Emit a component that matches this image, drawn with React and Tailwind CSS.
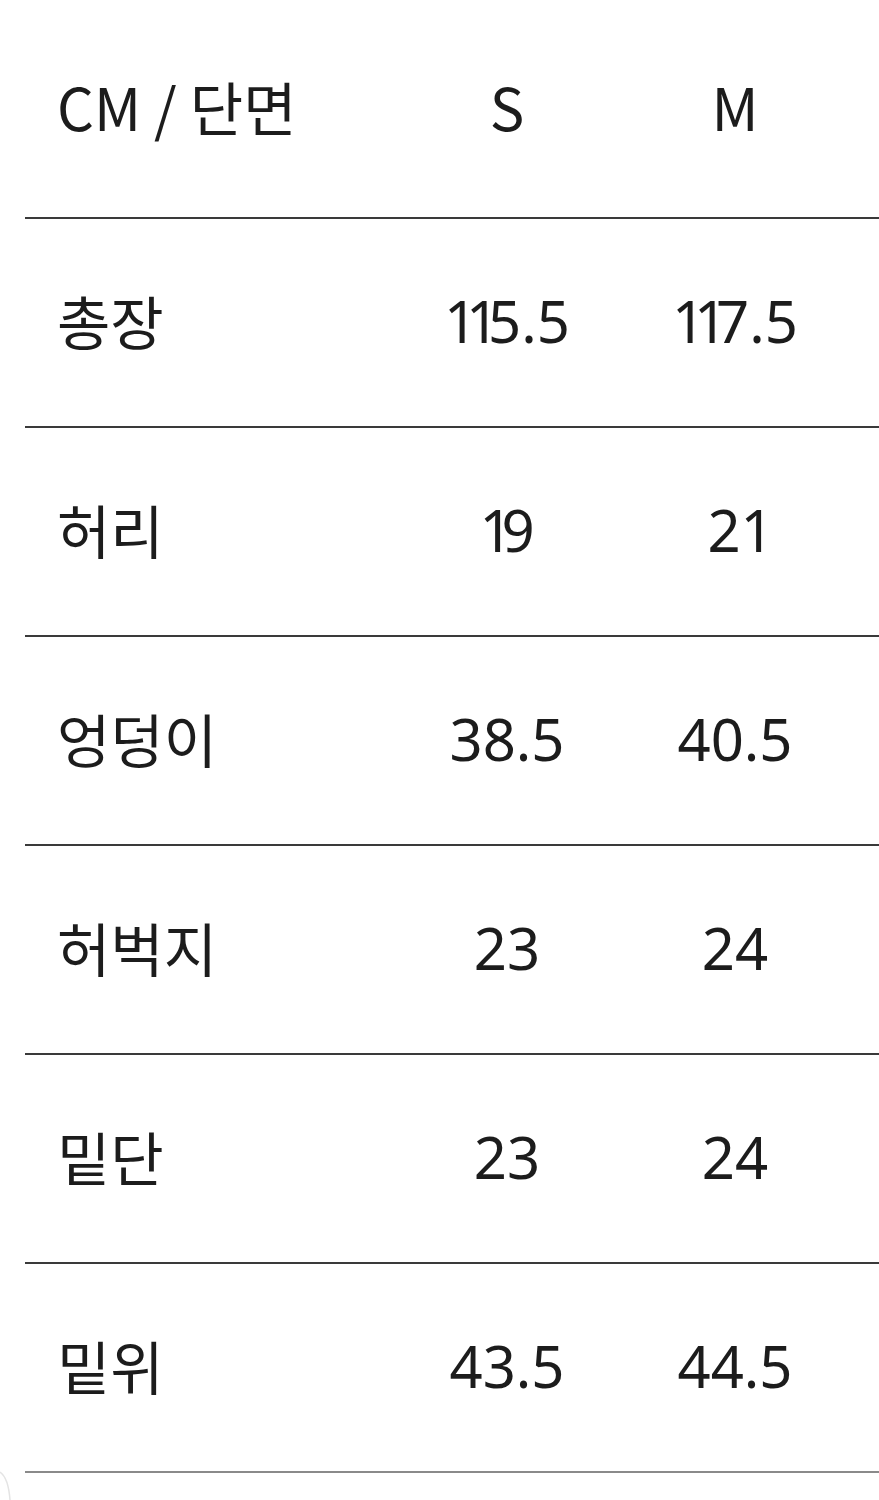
import React from "react";

const rows = [
  ["총장", "115.5", "117.5"],
  ["허리", "19", "21"],
  ["엉덩이", "38.5", "40.5"],
  ["허벅지", "23", "24"],
  ["밑단", "23", "24"],
  ["밑위", "43.5", "44.5"],
];

function Num({ v }) {
  return (
    <span style={{ fontFamily: '"Noto Sans", "Noto Sans CJK KR", sans-serif' }}>
      {v.split("").map((c, i) =>
        c === "1" ? (
          <span key={i} className="inline-block w-[22px] text-center">
            1
          </span>
        ) : (
          <span key={i}>{c}</span>
        )
      )}
    </span>
  );
}

function Row({ label, s, m, header, last }) {
  return (
    <div
      className={`grid grid-cols-[368px_228px_228px_1fr] items-center pb-[6px] border-b-2 ${
        last ? "border-[#8a8a8a]" : "border-[#3a3a3a]"
      } ${header ? "h-[219px]" : "h-[209px]"}`}
    >
      <div className="pl-[32px] whitespace-nowrap">{label}</div>
      <div className="text-center">{header ? s : <Num v={s} />}</div>
      <div className="text-center">{header ? m : <Num v={m} />}</div>
      <div />
    </div>
  );
}

export default function App() {
  return (
    <div
      className="w-[879px] h-[1500px] bg-white text-[#1c1c1c] text-[58px] leading-none overflow-hidden relative"
      style={{ fontFamily: '"Noto Sans CJK KR", "Noto Sans", sans-serif' }}
    >
      <div className="ml-[25px]">
        <Row label="CM / 단면" s="S" m="M" header />
        {rows.map((r, i) => (
          <Row key={i} label={r[0]} s={r[1]} m={r[2]} last={i === rows.length - 1} />
        ))}
      </div>
      <svg className="absolute left-0 top-[1468px]" width="14" height="32" viewBox="0 0 14 32">
        <path d="M0 4 C6 8 9 18 10 32" stroke="#e4e4e4" strokeWidth="1.5" fill="none" />
      </svg>
    </div>
  );
}
